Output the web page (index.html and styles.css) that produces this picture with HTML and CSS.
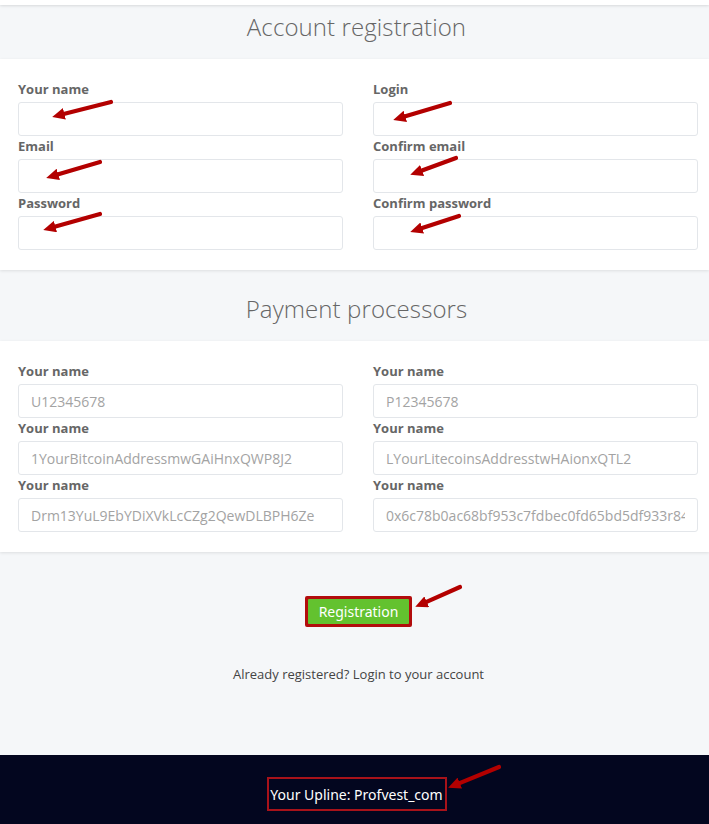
FILE: index.html
```
<!DOCTYPE html>
<html>
<head>
<meta charset="utf-8">
<link rel="stylesheet" href="styles.css">
</head>
<body>
<div class="page">
  <div class="topstrip"></div>
  <div class="section-head"><h2>Account registration</h2></div>
  <div class="card">
    <div class="grid">
      <div class="field"><label>Your name</label><input class="inp" type="text"></div>
      <div class="field"><label>Login</label><input class="inp" type="text"></div>
      <div class="field"><label>Email</label><input class="inp" type="text"></div>
      <div class="field"><label>Confirm email</label><input class="inp" type="text"></div>
      <div class="field"><label>Password</label><input class="inp" type="text"></div>
      <div class="field"><label>Confirm password</label><input class="inp" type="text"></div>
    </div>
  </div>
  <div class="section-head tall"><h2>Payment processors</h2></div>
  <div class="card">
    <div class="grid">
      <div class="field"><label>Your name</label><input class="inp" type="text" placeholder="U12345678"></div>
      <div class="field"><label>Your name</label><input class="inp" type="text" placeholder="P12345678"></div>
      <div class="field"><label>Your name</label><input class="inp" type="text" placeholder="1YourBitcoinAddressmwGAiHnxQWP8J2"></div>
      <div class="field"><label>Your name</label><input class="inp" type="text" placeholder="LYourLitecoinsAddresstwHAionxQTL2"></div>
      <div class="field"><label>Your name</label><input class="inp" type="text" placeholder="Drm13YuL9EbYDiXVkLcCZg2QewDLBPH6Ze"></div>
      <div class="field"><label>Your name</label><input class="inp" type="text" placeholder="0x6c78b0ac68bf953c7fdbec0fd65bd5df933r84"></div>
    </div>
  </div>
  <div class="actions">
    <div class="btn-frame"><button class="btn">Registration</button></div>
    <p class="already">Already registered? Login to your account</p>
  </div>
  <footer class="footer">
    <div class="upline">Your Upline: Profvest_com</div>
  </footer>
  <svg class="arrows" width="709" height="824" viewBox="0 0 709 824">
    <defs>
      <marker id="ah" markerWidth="3" markerHeight="2.8" refX="0.2" refY="1.4" orient="auto" markerUnits="strokeWidth">
        <path d="M0,0 L3,1.4 L0,2.8 Z" fill="#b30000"/>
      </marker>
    </defs>
    <g stroke="#b30000" stroke-width="4.2" stroke-linecap="round" marker-end="url(#ah)" fill="none">
      <line x1="111" y1="102" x2="63.6" y2="114"/>
      <line x1="450" y1="103" x2="404.5" y2="116.6"/>
      <line x1="100" y1="162" x2="57.5" y2="174.6"/>
      <line x1="456" y1="158" x2="421.3" y2="170.8"/>
      <line x1="100" y1="214" x2="54.6" y2="226.8"/>
      <line x1="459" y1="216" x2="421.4" y2="228.3"/>
      <line x1="460" y1="587" x2="426" y2="602.1"/>
      <line x1="499" y1="767" x2="459" y2="783.4"/>
    </g>
  </svg>
</div>
</body>
</html>
```
FILE: styles.css
```
* { box-sizing: border-box; }
html, body { margin: 0; padding: 0; }
body {
  background: #f5f7f9;
  font-family: "Open Sans", "Liberation Sans", sans-serif;
  color: #555;
}
.page {
  position: relative;
  width: 709px;
  height: 824px;
  overflow: hidden;
  display: flex;
  flex-direction: column;
}
.topstrip {
  height: 5px;
  background: #fff;
  box-shadow: 0 1px 3px rgba(0,0,0,0.12);
  position: relative;
  z-index: 1;
}
.section-head {
  height: 54px;
  display: flex;
  align-items: center;
  justify-content: center;
  background: #f5f7f9;
  padding-bottom: 12px;
  padding-left: 4px;
}
.section-head.tall { height: 71px; padding-top: 6px; padding-bottom: 0; }
.section-head h2 {
  margin: 0;
  font-weight: 300;
  font-size: 24px;
  color: #666;
  letter-spacing: 0.1px;
}
.card {
  background: #fff;
  padding: 21px 11px 20px 18px;
  box-shadow: 0 1px 3px rgba(0,0,0,0.1);
  position: relative;
  z-index: 1;
}
.grid {
  display: grid;
  grid-template-columns: 325px 325px;
  column-gap: 30px;
  row-gap: 1px;
}
.field { display: flex; flex-direction: column; }
.field label {
  font-size: 13px;
  font-weight: 700;
  line-height: 18px;
  color: #666;
  margin-bottom: 4px;
}
.inp {
  height: 34px;
  width: 100%;
  border: 1px solid #e3e6ea;
  border-radius: 3px;
  background: #fff;
  padding: 0 12px;
  font-family: "Open Sans", "Liberation Sans", sans-serif;
  font-size: 14px;
  color: #999;
  outline: none;
}
.inp::placeholder { color: #a3a3a3; }
.actions {
  flex: 1;
  display: flex;
  flex-direction: column;
  align-items: center;
  padding-top: 44px;
  padding-left: 8px;
}
.btn-frame {
  border: 2px solid #b20d0d;
  border-radius: 2px;
  background: #b20d0d;
  padding: 1px;
}
.btn {
  display: block;
  width: 101px;
  height: 25px;
  border: 0;
  border-radius: 1px;
  background: #63c22f;
  color: #fff;
  font-family: "Noto Sans", "Open Sans", sans-serif;
  font-size: 14px;
  padding: 0;
}
.already {
  margin: 38px 0 0;
  font-size: 13px;
  color: #444;
}
.footer {
  height: 69px;
  background: #03061f;
  display: flex;
  align-items: flex-start;
  justify-content: center;
  padding-top: 22px;
  padding-left: 4px;
}
.upline {
  border: 2px solid #a8121a;
  width: 180px;
  height: 34px;
  display: flex;
  align-items: center;
  justify-content: center;
  color: #fff;
  font-family: "Noto Sans", "Open Sans", sans-serif;
  font-size: 14px;
}
.arrows {
  position: absolute;
  left: 0;
  top: 0;
  pointer-events: none;
  z-index: 5;
}
```
